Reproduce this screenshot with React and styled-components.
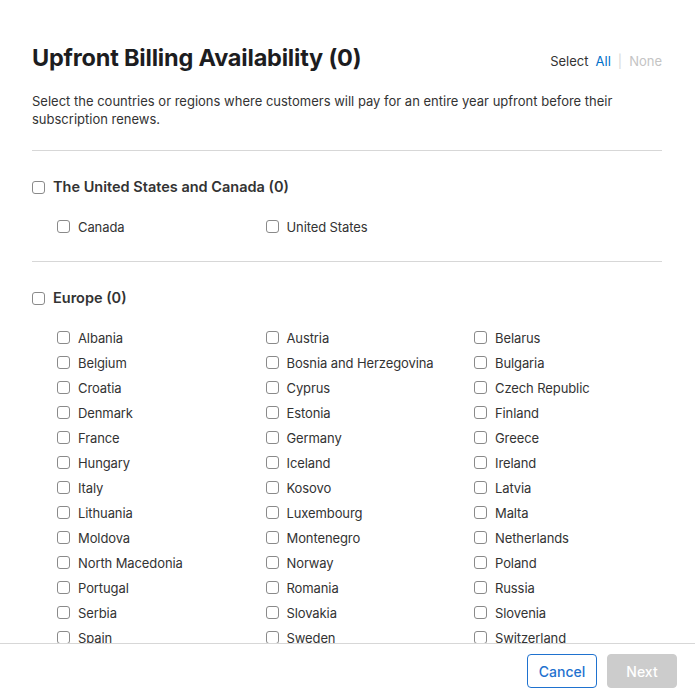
import React from "react";
import styled, { createGlobalStyle } from "styled-components";

const GlobalStyle = createGlobalStyle`
  html, body {
    margin: 0;
    padding: 0;
    background: #fff;
  }
  body {
    font-family: Inter, "Noto Sans", "Liberation Sans", sans-serif;
    color: #333;
  }
`;

const Dialog = styled.div`
  width: 695px;
  height: 695px;
  display: flex;
  flex-direction: column;
  background: #fff;
  overflow: hidden;
`;

const Body = styled.div`
  flex: 1;
  overflow: hidden;
  padding: 42px 33px 0 32px;
`;

const TitleRow = styled.div`
  display: flex;
  justify-content: space-between;
  align-items: center;
`;

const Title = styled.h1`
  margin: 0;
  font-size: 23.5px;
  line-height: 32px;
  font-weight: 700;
  color: #1d1d1f;
  letter-spacing: -0.2px;
`;

const SelectBox = styled.div`
  font-size: 13px;
  color: #333;
  display: flex;
  gap: 7px;
  margin-top: 6px;
`;

const SelectLink = styled.span`
  color: ${(p) => (p.disabled ? "#c4c4c4" : "#0070c9")};
`;

const Pipe = styled.span`
  color: #d8d8d8;
`;

const Description = styled.p`
  margin: 18px 0 22px;
  font-size: 13px;
  line-height: 18px;
  color: #333;
  max-width: 600px;
`;

const Section = styled.section`
  border-top: 1px solid #d7d7d7;
  padding: 24px 0 22px;
`;

const GroupHeader = styled.label`
  display: flex;
  align-items: center;
  gap: 8px;
  font-size: 14.5px;
  line-height: 24px;
  font-weight: 600;
  color: #333;
`;

const Grid = styled.div`
  display: grid;
  grid-template-columns: repeat(3, 208.5px);
  margin: 15px 0 0 25px;
`;

const Item = styled.label`
  display: flex;
  align-items: center;
  gap: 8px;
  height: 25px;
  font-size: 13px;
  letter-spacing: -0.1px;
  color: #333;
`;

const Box = styled.span`
  width: 11px;
  height: 11px;
  border: 1px solid #8a8a8a;
  border-radius: 3px;
  background: #fff;
  flex: none;
`;

const Footer = styled.footer`
  height: 52px;
  border-top: 1px solid #d7d7d7;
  display: flex;
  justify-content: flex-end;
  align-items: flex-start;
  gap: 10px;
  padding: 10px 18px 0 0;
  box-sizing: border-box;
  flex: none;
  background: #fff;
`;

const Button = styled.button`
  width: 70px;
  height: 34px;
  border-radius: 4px;
  font-family: inherit;
  font-size: 14px;
  font-weight: 500;
  border: 1px solid ${(p) => (p.primary ? "#cccccc" : "#1f72cf")};
  background: ${(p) => (p.primary ? "#cccccc" : "#fff")};
  color: ${(p) => (p.primary ? "#fff" : "#1f72cf")};
  padding: 0;
`;

const groups = [
  { name: "The United States and Canada", items: ["Canada", "United States"] },
  {
    name: "Europe",
    items: [
      "Albania", "Austria", "Belarus",
      "Belgium", "Bosnia and Herzegovina", "Bulgaria",
      "Croatia", "Cyprus", "Czech Republic",
      "Denmark", "Estonia", "Finland",
      "France", "Germany", "Greece",
      "Hungary", "Iceland", "Ireland",
      "Italy", "Kosovo", "Latvia",
      "Lithuania", "Luxembourg", "Malta",
      "Moldova", "Montenegro", "Netherlands",
      "North Macedonia", "Norway", "Poland",
      "Portugal", "Romania", "Russia",
      "Serbia", "Slovakia", "Slovenia",
      "Spain", "Sweden", "Switzerland",
      "Turkey", "Ukraine", "United Kingdom",
    ],
  },
];

export default function App() {
  return (
    <>
      <GlobalStyle />
      <Dialog>
        <Body>
          <TitleRow>
            <Title>Upfront Billing Availability (0)</Title>
            <SelectBox>
              <span>Select</span>
              <SelectLink>All</SelectLink>
              <Pipe>|</Pipe>
              <SelectLink disabled>None</SelectLink>
            </SelectBox>
          </TitleRow>
          <Description>
            Select the countries or regions where customers will pay for an entire year upfront before their
            subscription renews.
          </Description>
          {groups.map((g) => (
            <Section key={g.name}>
              <GroupHeader>
                <Box />
                {g.name} (0)
              </GroupHeader>
              <Grid>
                {g.items.map((c) => (
                  <Item key={c}>
                    <Box />
                    {c}
                  </Item>
                ))}
              </Grid>
            </Section>
          ))}
        </Body>
        <Footer>
          <Button>Cancel</Button>
          <Button primary>Next</Button>
        </Footer>
      </Dialog>
    </>
  );
}
